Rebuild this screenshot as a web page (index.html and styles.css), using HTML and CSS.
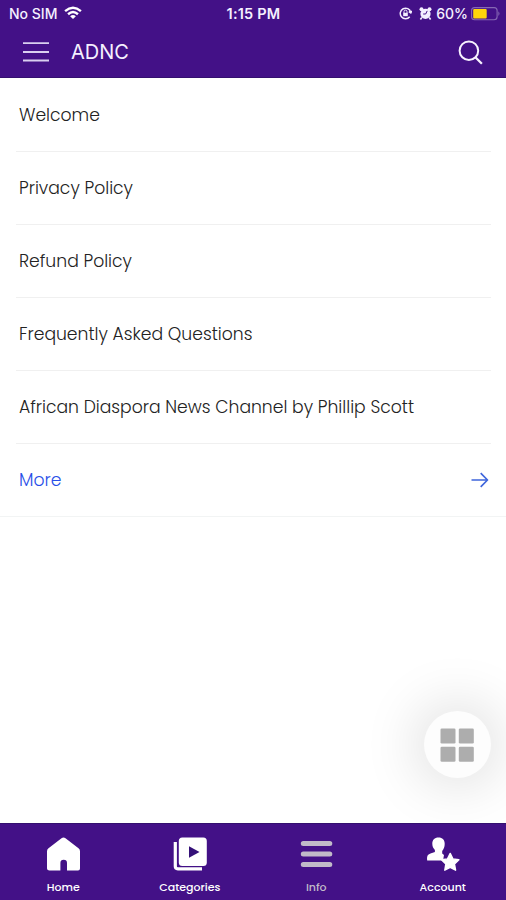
FILE: index.html
```html
<!DOCTYPE html>
<html lang="en">
<head>
<meta charset="utf-8">
<title>ADNC</title>
<link rel="stylesheet" href="styles.css">
</head>
<body>
<div class="app">
  <header class="header">
    <div class="status">
      <div class="status-left">
        <span class="carrier">No SIM</span>
        <svg class="wifi" width="18" height="14" viewBox="0 0 20 15" fill="none" stroke="#fff" stroke-width="2.7"><path d="M1.2 5.4Q10-2 18.8 5.4M4.5 8.9Q10 4.1 15.5 8.9"/><path d="M6.8 11Q10 8.2 13.2 11L10 14.3Z" fill="#fff" stroke="none"/></svg>
      </div>
      <span class="time">1:15 PM</span>
      <div class="status-right">
        <svg width="13" height="13" viewBox="0 0 13 13" fill="none" stroke="#f4efff" stroke-width="1.5"><path d="M10.7 9.8A5.3 5.3 0 1 1 11.7 5.2M9.8 4.6l2 1.3 1.1-2"/><rect x="4.2" y="5.8" width="4.6" height="3.4" fill="#f4efff" stroke="none"/><path d="M5 6V4.6a1.5 1.5 0 0 1 3 0V6" stroke-width="1"/></svg>
        <svg class="alarm" width="13" height="13" viewBox="0 0 13 13" fill="#f4efff"><circle cx="6.5" cy="6.8" r="5.1"/><circle cx="2.5" cy="2.3" r="2"/><circle cx="10.5" cy="2.3" r="2"/><path d="M2.8 10.500l-1.400 2M10.200 10.500l1.400 2" stroke="#f4efff" stroke-width="1.6"/><path d="M8.200 3.900L6.700 7H4.200" fill="none" stroke="#431187" stroke-width="1"/></svg>
        <span class="percent">60%</span>
        <svg class="battery" width="30" height="14" viewBox="0 0 30 14"><rect x=".6" y=".6" width="25.5" height="12.2" rx="3" fill="none" stroke="#8668b4" stroke-width="1.1"/><rect x="2.2" y="2.1" width="13.5" height="9.3" rx="1" fill="#ffd60a"/><path d="M27.4 4.3q2.2 2.3 0 4.7z" fill="#8668b4"/></svg>
      </div>
    </div>
    <div class="appbar">
      <svg class="menu" width="26" height="20" viewBox="0 0 26 20" stroke="#d9cff0" stroke-width="1.8"><path d="M0 1.2h26M0 10h26M0 18.5h26"/></svg>
      <h1 class="title">ADNC</h1>
      <svg class="search" width="25" height="25" viewBox="0 0 25 25" fill="none" stroke="#f7f2ff" stroke-width="2"><circle cx="10.9" cy="10.7" r="9.300"/><path d="M17.4 17.2l6.500 6.500" stroke-width="2.3"/></svg>
    </div>
  </header>
  <main class="content">
    <ul class="list">
      <li class="row">Welcome</li>
      <li class="row">Privacy Policy</li>
      <li class="row">Refund Policy</li>
      <li class="row">Frequently Asked Questions</li>
      <li class="row">African Diaspora News Channel by Phillip Scott</li>
    </ul>
    <div class="more"><span>More</span>
      <svg width="18" height="16" viewBox="0 0 18 16" fill="none" stroke="#3f66dc" stroke-width="1.7" stroke-linejoin="round"><path d="M.5 8H16.5M9.7 1.2L16.5 8l-6.8 6.8"/></svg>
    </div>
    <div class="fab"><svg width="34" height="34" viewBox="0 0 34 34" fill="#adadad"><rect x=".5" y=".5" width="15" height="15" rx="1.3"/><rect x="18.8" y=".5" width="15" height="15" rx="1.3"/><rect x=".5" y="18.8" width="15" height="15" rx="1.3"/><rect x="18.8" y="18.8" width="15" height="15" rx="1.3"/></svg></div>
  </main>
  <nav class="tabs">
    <div class="tab home"><svg width="36" height="36" viewBox="0 0 36 36" fill="#fff"><path d="M18.500 1.500q1 0 2 .8L33.500 12.300q1.500 1.200 1.500 3V32.500q0 2-2 2H22V27a3.300 3.300 0 0 0-6.600 0v7.500H4.500Q2 34.500 2 32.500V15.300q0-1.800 1.500-3L16.500 2.300q1-.8 2-.8z"/></svg><span>Home</span></div>
    <div class="tab categories"><svg width="36" height="36" viewBox="0 0 36 36"><path d="M3.3 6v24.300q0 2.500 2.500 2.500H30" fill="none" stroke="#fff" stroke-width="3.200"/><rect x="6.800" y="1.500" width="28" height="28.500" rx="3.500" fill="#fff"/><path d="M17 10.300v11.500L27.500 16z" fill="#341078"/></svg><span>Categories</span></div>
    <div class="tab info"><svg width="36" height="36" viewBox="0 0 36 36" stroke="#c1bac9" stroke-width="5" stroke-linecap="round"><path d="M5.300 7.500h26.500M5.300 18h26.500M5.300 28.500h26.500"/></svg><span>Info</span></div>
    <div class="tab account"><svg width="36" height="36" viewBox="0 0 36 36" fill="#fff"><path d="M13.500 1.500c4 0 6.200 2.400 6.200 6.300 0 3.200-.9 5-2.500 7.300v2.500l1.800 1.500-1 5.400H2.200c-.5-4.200.3-5.800 3.300-6.900l4.400-1.600v-2C8.200 12.200 7.300 10.500 7.300 7.800c0-3.900 2.200-6.300 6.200-6.300z"/><path d="M25.200 17.400l2.700 5.500 6 .9-4.400 4.300 1.100 6.100-5.400-2.900-5.400 2.900 1-6.100-4.300-4.300 6-.9z" stroke="#fff" stroke-width="1.400" stroke-linejoin="round"/></svg><span>Account</span></div>
  </nav>
</div>
</body>
</html>
```
FILE: styles.css
```css
* { box-sizing: border-box; }
body { margin: 0; background: #fff; font-family: Poppins, Inter, "Liberation Sans", sans-serif; }
.app { width: 506px; height: 900px; display: flex; flex-direction: column; overflow: hidden; }
.header { height: 78px; flex: none; background: #431187; color: #f5f0ff; border-bottom: 1px solid #34106f; font-family: Inter, sans-serif; }
.status { height: 27px; padding: 0 5px 0 9px; display: grid; grid-template-columns: 1fr auto 1fr; align-items: center; font-size: 14px; line-height: 27px; }
.status-left, .status-right { display: flex; align-items: center; }
.status-right { justify-content: flex-end; }
.carrier { font-weight: 500; }
.wifi { margin: -2px 0 0 7px; }
.time { font-weight: 600; font-size: 14.5px; letter-spacing: .2px; margin-left: -3px; }
.alarm { margin-left: 7px; }
.percent { margin-left: 4px; font-weight: 500; }
.battery { margin-left: 3px; }
.appbar { height: 50px; display: flex; align-items: center; padding: 0 23px; }
.title { margin: 0 auto 0 22px; font-size: 20px; line-height: 28px; font-weight: 400; }
.content { flex: 1; position: relative; overflow: hidden; background: #fff; }
.list { list-style: none; margin: 0; padding: 1px 15px 0 16px; }
.row { height: 73px; padding-left: 3px; border-bottom: 1px solid #f0f0f0; display: flex; align-items: center; font-size: 17.2px; font-weight: 300; color: #222; white-space: nowrap; }
.more { height: 73px; padding: 0 17px 0 19px; border-bottom: 1px solid #f2f4f4; display: flex; align-items: center; justify-content: space-between; font-size: 17.2px; font-weight: 300; color: #284fe8; }
.fab { position: absolute; right: 15px; bottom: 45px; width: 67px; height: 67px; border-radius: 50%; background: #fdfdfd; box-shadow: 0 0 55px 8px rgba(0,0,0,.13); display: grid; place-items: center; }
.fab svg { margin-right: 1px; }
.tabs { height: 77px; flex: none; background: #431187; border-top: 1px solid #34106f; display: grid; grid-template-columns: repeat(4, 1fr); color: #fff; }
.tab { display: flex; flex-direction: column; align-items: center; padding-top: 12px; font-size: 11px; line-height: 16px; font-weight: 500; }
.tab span { margin-top: 7px; }
.info { color: #c1bac9; }
```
